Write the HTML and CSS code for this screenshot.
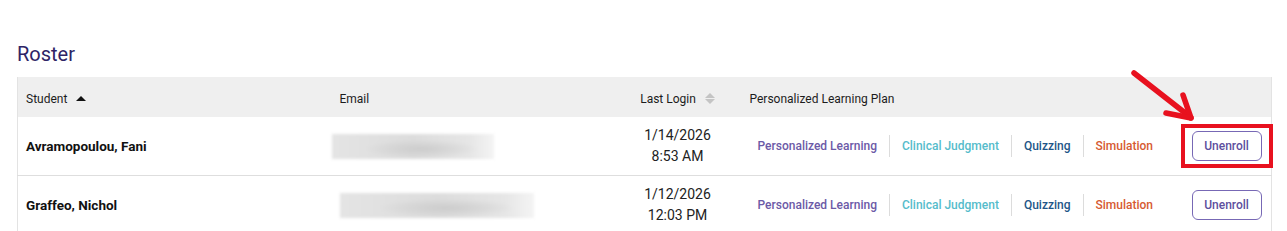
FILE: index.html
```html
<!DOCTYPE html>
<html lang="en">
<head>
    <meta charset="UTF-8">
    <title>Roster</title>
    <link rel="stylesheet" href="styles.css">
</head>
<body>
    <div class="page">
        <h2 class="title">Roster</h2>
        <table class="roster">
            <colgroup>
                <col class="col-student">
                <col class="col-email">
                <col class="col-login">
                <col class="col-plan">
                <col class="col-action">
            </colgroup>
            <thead>
                <tr>
                    <th>Student <span class="sort-up"></span></th>
                    <th>Email</th>
                    <th class="center">Last Login <span class="sort-both"><i></i><i></i></span></th>
                    <th>Personalized Learning Plan</th>
                    <th></th>
                </tr>
            </thead>
            <tbody>
                <tr>
                    <td class="name">Avramopoulou, Fani</td>
                    <td><div class="blur blur-a"></div></td>
                    <td class="center date">1/14/2026<br>8:53 AM</td>
                    <td>
                        <div class="plan">
                            <a class="pl">Personalized Learning</a>
                            <a class="cj">Clinical Judgment</a>
                            <a class="qz">Quizzing</a>
                            <a class="sim">Simulation</a>
                        </div>
                    </td>
                    <td class="action">
                        <span class="btn-wrap">
                            <button class="unenroll">Unenroll</button>
                            <span class="highlight"></span>
                        </span>
                    </td>
                </tr>
                <tr>
                    <td class="name">Graffeo, Nichol</td>
                    <td><div class="blur blur-b"></div></td>
                    <td class="center date">1/12/2026<br>12:03 PM</td>
                    <td>
                        <div class="plan">
                            <a class="pl">Personalized Learning</a>
                            <a class="cj">Clinical Judgment</a>
                            <a class="qz">Quizzing</a>
                            <a class="sim">Simulation</a>
                        </div>
                    </td>
                    <td class="action">
                        <span class="btn-wrap">
                            <button class="unenroll">Unenroll</button>
                        </span>
                    </td>
                </tr>
            </tbody>
        </table>

        <!-- annotation arrow -->
        <svg class="arrow" width="80" height="64" viewBox="0 0 80 64">
            <g stroke="#e8111f" stroke-width="5.5" stroke-linecap="round" fill="none">
                <line x1="9" y1="8" x2="64" y2="51"/>
                <line x1="66" y1="53" x2="58" y2="30"/>
                <line x1="66" y1="53" x2="41" y2="48"/>
            </g>
        </svg>
    </div>
</body>
</html>
```

FILE: styles.css
```css
body {
    margin: 0;
    background: #fff;
    font-family: Roboto, "Liberation Sans", sans-serif;
    color: #222;
}

.page {
    position: relative;
    padding: 42px 17px 0;
}

.title {
    margin: 0 0 11px;
    font-size: 20px;
    line-height: 24px;
    font-weight: 400;
    color: #2e2466;
}

.roster {
    width: 1254px;
    border-collapse: collapse;
    table-layout: fixed;
    border-left: 1px solid #e3e3e3;
    border-right: 1px solid #e3e3e3;
}

.col-student { width: 314px; }
.col-email { width: 282px; }
.col-login { width: 128px; }
.col-plan { width: 435px; }
.col-action { width: 95px; }

.roster th {
    height: 37px;
    padding: 3px 8px 0;
    background: #efefef;
    font-size: 12px;
    font-weight: 400;
    text-align: left;
    color: #1c1c1c;
}

.roster td {
    height: 58px;
    padding: 0 8px;
    border-bottom: 1px solid #dedede;
    font-size: 13px;
}

.center {
    text-align: center !important;
}

.sort-up {
    display: inline-block;
    margin-left: 6px;
    border-left: 5px solid transparent;
    border-right: 5px solid transparent;
    border-bottom: 5px solid #111;
    vertical-align: 2px;
}

.sort-both {
    display: inline-block;
    margin-left: 6px;
    vertical-align: -1px;
}

.sort-both i {
    display: block;
    width: 0;
    border-left: 5px solid transparent;
    border-right: 5px solid transparent;
}

.sort-both i:first-child {
    border-bottom: 5px solid #c4c4c4;
    margin-bottom: 1px;
}

.sort-both i:last-child {
    border-top: 5px solid #c4c4c4;
}

.name {
    font-size: 13.5px !important;
    font-weight: 700;
    color: #111;
}

.date {
    font-size: 14px !important;
    line-height: 21px;
    color: #222;
}

.blur {
    height: 25px;
    background:
        radial-gradient(ellipse at 55% 60%, #cccccc 0, rgba(210,210,210,0) 45%),
        linear-gradient(90deg, #e4e4e4, #dcdcdc 50%, #e6e6e6 85%, #f4f4f4);
    filter: blur(1.5px);
}

.blur-a {
    width: 162px;
    margin-left: -8px;
}

.blur-b {
    width: 194px;
}

.plan {
    display: flex;
    align-items: center;
    padding-left: 8px;
}

.plan a {
    font-size: 12px;
    font-weight: 500;
    padding: 0 12px;
    line-height: 22px;
    border-left: 1px solid #dcdcdc;
}

.plan a:first-child {
    border-left: none;
    padding-left: 0;
}

.pl { color: #6c5aa7; }
.cj { color: #56bccb; }
.qz { color: #1f5688; }
.sim { color: #d65a31; }

.action {
    padding-left: 15px !important;
}

.btn-wrap {
    position: relative;
    display: inline-block;
}

.unenroll {
    display: block;
    width: 70px;
    height: 30px;
    border: 1px solid #7768b5;
    border-radius: 6px;
    background: #fff;
    color: #5d4f9e;
    font-family: Roboto, "Liberation Sans", sans-serif;
    font-size: 12px;
    font-weight: 500;
    cursor: pointer;
}

.highlight {
    position: absolute;
    top: -7px;
    bottom: -7px;
    left: -11px;
    right: -11px;
    border: 4px solid #e8111f;
}

.arrow {
    position: absolute;
    left: 1125px;
    top: 65px;
}
```
